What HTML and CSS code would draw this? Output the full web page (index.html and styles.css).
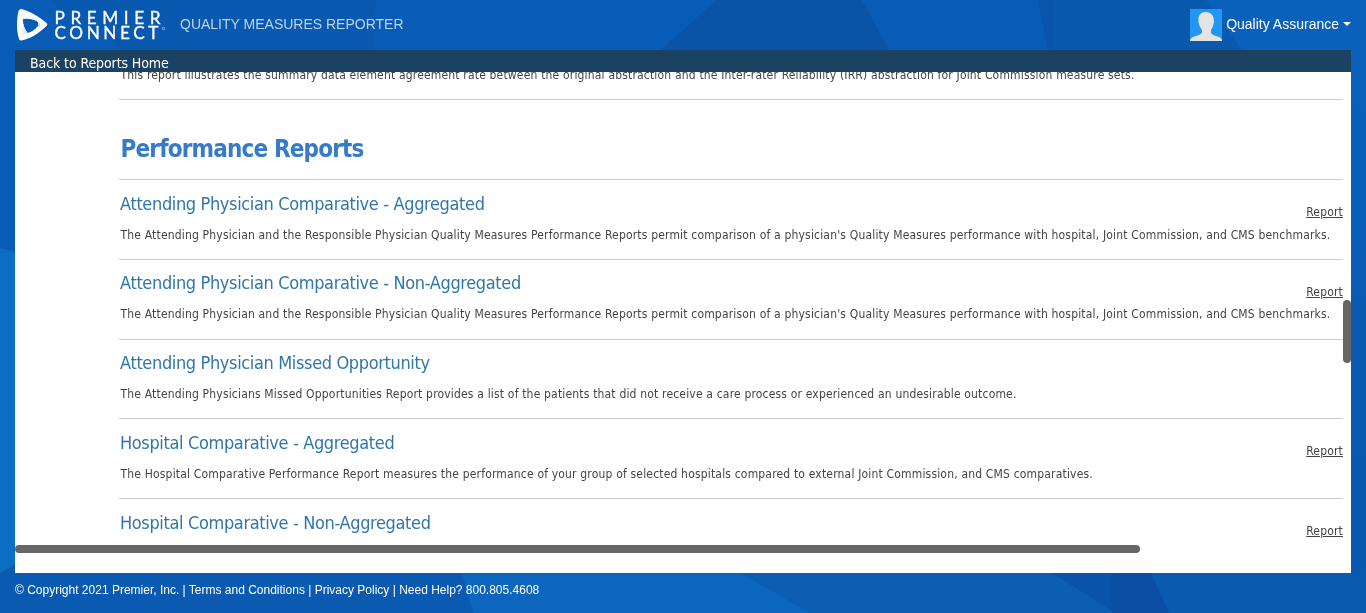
FILE: index.html
```html
<!DOCTYPE html>
<html lang="en">
<head>
<meta charset="utf-8">
<title>Quality Measures Reporter</title>
<link rel="stylesheet" href="styles.css">
</head>
<body>
<svg class="backdrop" viewBox="0 0 1366 613" preserveAspectRatio="none" aria-hidden="true">
  <defs><linearGradient id="edge" x1="0" y1="0" x2="0" y2="1"><stop offset="0" stop-color="#0a61bb"/><stop offset=".35" stop-color="#0a5fb8"/><stop offset=".5" stop-color="#0a5ab0"/><stop offset="1" stop-color="#0a59af"/></linearGradient></defs>
  <path fill="#085cb5" d="M0 0h1366v613H0z"/>
  <path fill="#0959b0" d="M50 0h325l-2 50H122z"/>
  <path fill="#0a54a8" d="M716 0h146l27 50H661z"/>
  <path fill="#0855ab" d="M1038 0h15l2 50h-7z"/>
  <path fill="#0959af" d="M1053 0h153l36 50h-187z"/>
  <path fill="url(#edge)" d="M1206 0h160v613h-15V50h-109z"/>
  <path fill="#0b6ec2" d="M0 248l15 4v312l-15 10z"/>
  <path fill="#0a5ab1" d="M0 574l15-10v9h447l11 40H0z"/>
  <path fill="#0c66bd" d="M462 573h279l70 40H473z"/>
  <path fill="#0b5eb1" d="M741 573h311l81 40H811z"/>
  <path fill="#0a53ab" d="M1052 573h60v38z"/>
  <path fill="#0a4fa3" d="M1111 573h40l18 40h-57z"/>
  <path fill="#0a5ab0" d="M1151 573h215v40h-197z"/>
</svg>
<div class="page">
  <header class="header">
    <svg class="logo" width="150" height="34" viewBox="0 0 150 34" role="img" aria-label="Premier Connect">
      <defs>
        <linearGradient id="fold-a" x1="0" y1="0" x2="1" y2="1"><stop offset="0" stop-color="#fff"/><stop offset="1" stop-color="#d3d7dc"/></linearGradient>
        <linearGradient id="fold-b" x1="1" y1="0" x2="0" y2="1"><stop offset="0" stop-color="#d3d7dc"/><stop offset="1" stop-color="#fff"/></linearGradient>
      </defs>
      <path fill="#fff" fill-rule="evenodd" d="M6.500 0C13 1.500 24 7.500 31 13.500q2.500 2 0 4C24 24 15 30 6.500 31.500Q4.500 31.500 4 30C1.500 21 1.500 14 3 4Q3.500 0 6.500 0zM8 10Q7.500 17 12.500 24 18.500 22.500 23 17q1-2 0-4Q17 9 8 10z"/>
      <path fill="url(#fold-a)" d="M13 9.500Q20 10 23 13q1 2 0 4l2 1.500Q27 12 17 8z"/>
      <path fill="url(#fold-b)" d="M8 14Q8.500 19 12.500 24L6 28Q8 22 8 14z"/>
      <g class="logo-text"><text x="39.500" y="15" textLength="106">PREMIER</text><text x="39.500" y="30" textLength="104">CONNECT</text></g>
      <circle cx="148.500" cy="19.500" r="1.200" fill="none" stroke="#b8cee9" stroke-width=".7"/>
    </svg>
    <span class="app-name">QUALITY MEASURES REPORTER</span>
    <div class="user">
      <svg width="32" height="32" viewBox="0 0 32 32"><path fill="#2196f3" d="M0 0h32v32H0z"/><path fill="#e4e4e4" d="M15.500 3C10.500 3 8 7 8.500 11q-.5 2 .5 4 .5 3 3 6v3Q10 26 6 27 1 28 0 31v1h32v-1q-1-3-6-4-4-1-5-3v-3q2-3 2.500-6 1-2 .3-4C24 7 21 3 15.500 3z"/></svg>
      <span class="user-name">Quality Assurance</span><i class="caret"></i>
    </div>
  </header>
  <nav class="nav"><a>Back to Reports Home</a></nav>
  <main class="panel">
    <div class="reports">
      <p class="desc clipped">This report illustrates the summary data element agreement rate between the original abstraction and the Inter-rater Reliability (IRR) abstraction for Joint Commission measure sets.</p>
      <h1><span>Performance Reports</span></h1>
      <section class="row"><h2>Attending Physician Comparative - Aggregated</h2><a class="link">Report</a><p class="desc">The Attending Physician and the Responsible Physician Quality Measures Performance Reports permit comparison of a physician's Quality Measures performance with hospital, Joint Commission, and CMS benchmarks.</p></section>
      <section class="row"><h2>Attending Physician Comparative - Non-Aggregated</h2><a class="link">Report</a><p class="desc">The Attending Physician and the Responsible Physician Quality Measures Performance Reports permit comparison of a physician's Quality Measures performance with hospital, Joint Commission, and CMS benchmarks.</p></section>
      <section class="row"><h2>Attending Physician Missed Opportunity</h2><p class="desc">The Attending Physicians Missed Opportunities Report provides a list of the patients that did not receive a care process or experienced an undesirable outcome.</p></section>
      <section class="row"><h2>Hospital Comparative - Aggregated</h2><a class="link">Report</a><p class="desc">The Hospital Comparative Performance Report measures the performance of your group of selected hospitals compared to external Joint Commission, and CMS comparatives.</p></section>
      <section class="row"><h2>Hospital Comparative - Non-Aggregated</h2><a class="link">Report</a></section>
    </div>
    <i class="thumb-v"></i><i class="thumb-h"></i>
  </main>
  <footer class="footer">© Copyright 2021 Premier, Inc. | Terms and Conditions | Privacy Policy | Need Help? 800.805.4608</footer>
</div>
</body>
</html>
```
FILE: styles.css
```css
* { box-sizing: border-box; }
body { margin: 0; height: 613px; overflow: hidden; background: #085cb5; font-family: "Liberation Sans", Arial, sans-serif; }
.backdrop { position: fixed; inset: 0; width: 100%; height: 613px; z-index: -1; }
.page { height: 613px; padding: 0 15px; display: flex; flex-direction: column; }
.header { height: 50px; display: flex; align-items: center; color: #fff; }
.logo { display: block; margin-top: 1px; flex: none; overflow: visible; }
.logo-text { font: 400 17.2px Lato, sans-serif; fill: #fff; stroke: #fff; stroke-width: .3px; }
.app-name { margin: -2px 0 0 15px; font-size: 14px; line-height: 16px; color: #bdd3ee; white-space: nowrap; }
.user { margin-left: auto; display: flex; align-items: center; font-size: 14px; white-space: nowrap; }
.user svg { display: block; margin-right: 4px; }
.user-name { margin-top: -2px; }
.caret { margin: -2px 0 0 4px; border: 4px solid transparent; border-top-color: #fff; border-bottom: 0; }
.nav { height: 22px; background: #1c4261; color: #fff; padding: 3px 15px 0; font: 14px/20px "DejaVu Sans Condensed", "DejaVu Sans", sans-serif; font-stretch: condensed; letter-spacing: -.1px; }
.panel { position: relative; height: 501px; padding: 0 8px 28px 104px; background: #fff; }
.reports { height: 473px; overflow: hidden; font-family: "DejaVu Sans Condensed", "DejaVu Sans", sans-serif; font-stretch: condensed; }
.desc { margin: 0; padding-left: 1.5px; font-size: 12px; line-height: 16px; color: #444; letter-spacing: .178px; white-space: nowrap; }
.clipped { margin-top: -5px; height: 32px; }
h1 { margin: 0; height: 80.2px; border-top: 1px solid #ccc; padding: 34px 0 0 1.5px; font-size: 24px; line-height: 30px; color: #377bc8; letter-spacing: -.83px; }
.row { display: grid; grid-template-columns: 1fr auto; grid-template-rows: 46.5px 1fr; height: 79.75px; border-top: 1px solid #ccc; }
h2 { margin: 0; padding: 11.4px 0 0 1px; font-size: 18px; line-height: 24px; font-weight: 400; color: #2f76aa; letter-spacing: -.36px; white-space: nowrap; }
.link { align-self: start; padding-top: 24px; font-size: 12px; line-height: 16px; color: #444; letter-spacing: .17px; text-decoration: underline; }
.row .desc { grid-row: 2; grid-column: 1 / 3; width: 0; }
.thumb-v { position: absolute; right: 0; top: 228px; width: 8px; height: 63px; border-radius: 4px; background: #666; }
.thumb-h { position: absolute; left: 0; top: 473px; width: 1125px; height: 8px; border-radius: 4px; background: #666; }
.footer { padding-top: 10px; font-size: 12px; line-height: 14px; color: #fff; white-space: nowrap; }
```
